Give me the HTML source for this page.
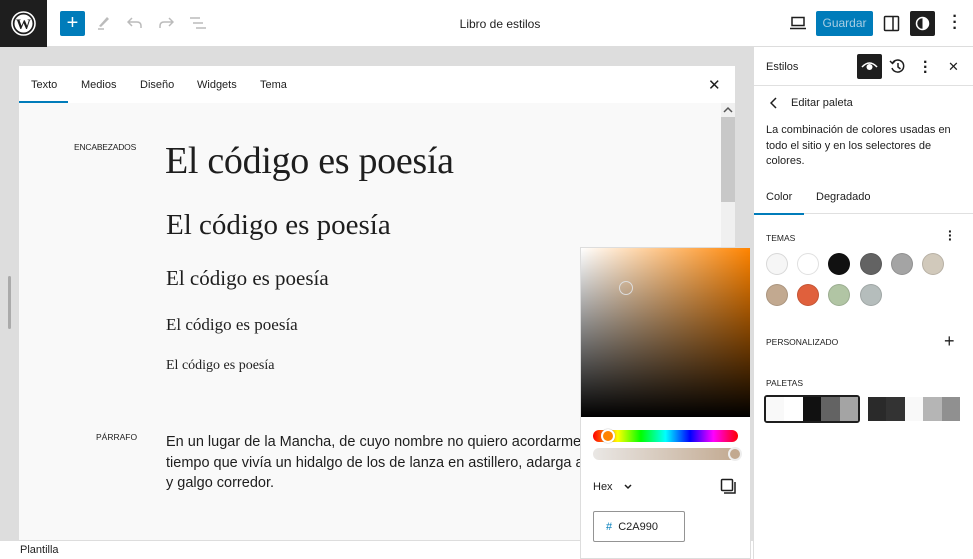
<!DOCTYPE html>
<html><head><meta charset="utf-8"><style>
*{box-sizing:border-box;margin:0;padding:0}
body{width:973px;height:559px;overflow:hidden;font-family:"Liberation Sans",sans-serif;background:#ddd;position:relative;color:#1e1e1e}
.abs{position:absolute}
.top{left:0;top:0;width:973px;height:47px;background:#fff;border-bottom:1px solid #ddd}
.serif{font-family:"Liberation Serif",serif;color:#1e1e1e;white-space:nowrap}
.circ{position:absolute;width:22px;height:22px;border-radius:50%;border:1px solid rgba(0,0,0,.12)}
.sw{display:inline-block;height:100%}
</style></head><body>
<div class="abs top"></div>
<div class="abs" style="left:0;top:0;width:47px;height:47px;background:#1e1e1e"></div>
<svg class="abs" style="left:11px;top:11px" width="25" height="25" viewBox="0 0 25 25"><circle cx="12.5" cy="12.5" r="11.5" fill="none" stroke="#fff" stroke-width="1.6"/><circle cx="12.5" cy="12.5" r="9" fill="#fff"/><text x="12.5" y="18" text-anchor="middle" font-family="Liberation Serif" font-weight="bold" font-size="15" fill="#1e1e1e">W</text></svg>
<div class="abs" style="left:60px;top:11px;width:25px;height:25px;background:#007cba;border-radius:2px;color:#fff;font-size:20px;line-height:24px;text-align:center">+</div>
<svg class="abs" style="left:96px;top:14px" width="16" height="16"><path d="M3 12 L11 3 L13 5 L5 13Z" fill="#bbb"/><path d="M2 15h6" stroke="#bbb" stroke-width="1.5"/></svg>
<svg class="abs" style="left:127px;top:16px" width="16" height="14" fill="none" stroke="#bbb" stroke-width="1.5"><path d="M5 2 L1 6 L5 10 M1 6 H10 Q14 6 14 10 V12"/></svg>
<svg class="abs" style="left:158px;top:16px" width="16" height="14" fill="none" stroke="#bbb" stroke-width="1.5"><path d="M11 2 L15 6 L11 10 M15 6 H6 Q2 6 2 10 V12"/></svg>
<svg class="abs" style="left:189px;top:16px" width="18" height="14" stroke="#bbb" stroke-width="1.5"><path d="M1 2h10M4 7h10M7 12h10"/></svg>
<div class="abs" style="left:0;width:1000px;top:17px;text-align:center;font-size:12px;color:#1e1e1e">Libro de estilos</div>
<svg class="abs" style="left:789px;top:16px" width="18" height="14" fill="none" stroke="#1e1e1e" stroke-width="1.5"><rect x="3" y="1.5" width="12" height="8"/><path d="M1 12.5h16"/></svg>
<div class="abs" style="left:816px;top:11px;width:57px;height:25px;background:#007cba;border-radius:2px;color:#a7cde3;font-size:12px;line-height:25px;text-align:center">Guardar</div>
<svg class="abs" style="left:883px;top:15px" width="17" height="17" fill="none" stroke="#1e1e1e" stroke-width="1.5"><rect x="1.5" y="1.5" width="14" height="14" rx="1"/><path d="M10 1.5v14"/></svg>
<div class="abs" style="left:910px;top:11px;width:25px;height:25px;background:#1e1e1e;border-radius:2px"></div>
<svg class="abs" style="left:915px;top:16px" width="15" height="15"><circle cx="7.5" cy="7.5" r="6" fill="none" stroke="#fff" stroke-width="1.5"/><path d="M7.5 1.5 A6 6 0 0 1 7.5 13.5Z" fill="#fff"/></svg>
<div class="abs" style="left:952px;top:14px;font-size:16px;line-height:6px;font-weight:bold;text-align:center;width:6px">·<br>·<br>·</div>

<div class="abs" style="left:8px;top:276px;width:3px;height:53px;background:#aaa;border-radius:2px"></div>

<div class="abs" style="left:19px;top:66px;width:716px;height:474px;background:#f9f9f9"></div>
<div class="abs" style="left:19px;top:66px;width:716px;height:37px;background:#fff;font-size:11px"></div>
<div class="abs" style="left:31px;top:79px;font-size:11px">Texto</div>
<div class="abs" style="left:81px;top:79px;font-size:11px">Medios</div>
<div class="abs" style="left:140px;top:79px;font-size:11px">Diseño</div>
<div class="abs" style="left:197px;top:79px;font-size:11px">Widgets</div>
<div class="abs" style="left:260px;top:79px;font-size:11px">Tema</div>
<div class="abs" style="left:19px;top:101px;width:49px;height:2px;background:#007cba"></div>
<div class="abs" style="left:708px;top:76px;font-size:15px">✕</div>
<div class="abs" style="left:721px;top:103px;width:14px;height:437px;background:#f0f0f0"></div>
<div class="abs" style="left:721px;top:117px;width:14px;height:85px;background:#c8c8c8"></div>
<svg class="abs" style="left:723px;top:106px" width="10" height="8" fill="none" stroke="#555" stroke-width="1.5"><path d="M1 6 L5 2 L9 6"/></svg>

<div class="abs" style="left:74px;top:142px;font-size:8.5px;letter-spacing:-0.2px">ENCABEZADOS</div>
<div class="abs serif" style="left:165px;top:139px;font-size:38px;letter-spacing:-0.3px">El código es poesía</div>
<div class="abs serif" style="left:166px;top:209px;font-size:29px">El código es poesía</div>
<div class="abs serif" style="left:166px;top:266px;font-size:21px">El código es poesía</div>
<div class="abs serif" style="left:166px;top:315px;font-size:17px">El código es poesía</div>
<div class="abs serif" style="left:166px;top:358px;font-size:14px">El código es poesía</div>
<div class="abs" style="left:96px;top:432px;font-size:8.5px">PÁRRAFO</div>
<div class="abs" style="left:166px;top:432px;font-size:14.5px;line-height:20.5px;white-space:nowrap;width:415px;overflow:hidden">En un lugar de la Mancha, de cuyo nombre no quiero acordarme, no<br>tiempo que vivía un hidalgo de los de lanza en astillero, adarga antigua<br>y galgo corredor.</div>

<div class="abs" style="left:0;top:540px;width:753px;height:19px;background:#fff;border-top:1px solid #ddd;font-size:11px;padding:3px 0 0 20px">Plantilla</div>

<div class="abs" style="left:753px;top:47px;width:220px;height:512px;background:#fff;border-left:1px solid #ddd"></div>
<div class="abs" style="left:754px;top:85px;width:219px;height:1px;background:#e0e0e0"></div>
<div class="abs" style="left:766px;top:61px;font-size:11px">Estilos</div>
<div class="abs" style="left:857px;top:54px;width:25px;height:25px;background:#1e1e1e;border-radius:2px"></div>
<svg class="abs" style="left:861px;top:60px" width="17" height="12"><path d="M1 7 Q8.5 -1 16 7" fill="none" stroke="#fff" stroke-width="1.6"/><circle cx="8.5" cy="7" r="3" fill="#fff"/></svg>
<svg class="abs" style="left:889px;top:58px" width="17" height="17" fill="none" stroke="#1e1e1e" stroke-width="1.5"><path d="M3.5 5 A6 6 0 1 1 3 10"/><path d="M1 3 L3.5 5.5 L6 3"/><path d="M9 5v4l2.5 2"/></svg>
<div class="abs" style="left:923px;top:60px;font-size:16px;line-height:5px;font-weight:bold;width:6px">·<br>·<br>·</div>
<div class="abs" style="left:948px;top:59px;font-size:13px">✕</div>
<svg class="abs" style="left:770px;top:97px" width="8" height="12" fill="none" stroke="#1e1e1e" stroke-width="1.5"><path d="M6 1 L1 6 L6 11"/></svg>
<div class="abs" style="left:791px;top:97px;font-size:11px">Editar paleta</div>
<div class="abs" style="left:766px;top:123px;font-size:11px;line-height:15.5px;width:190px">La combinación de colores usadas en todo el sitio y en los selectores de colores.</div>
<div class="abs" style="left:766px;top:191px;font-size:11px">Color</div>
<div class="abs" style="left:816px;top:191px;font-size:11px">Degradado</div>
<div class="abs" style="left:754px;top:213px;width:219px;height:1px;background:#e0e0e0"></div>
<div class="abs" style="left:754px;top:213px;width:50px;height:2px;background:#007cba"></div>
<div class="abs" style="left:766px;top:233px;font-size:8.5px">TEMAS</div>
<div class="abs" style="left:948px;top:229px;font-size:14px;line-height:4px;font-weight:bold;width:6px">·<br>·<br>·</div>
<div class="circ" style="left:766px;top:253px;background:#f6f6f6"></div>
<div class="circ" style="left:797px;top:253px;background:#fff"></div>
<div class="circ" style="left:828px;top:253px;background:#111"></div>
<div class="circ" style="left:860px;top:253px;background:#636363"></div>
<div class="circ" style="left:891px;top:253px;background:#a4a4a4"></div>
<div class="circ" style="left:922px;top:253px;background:#d1c9bb"></div>
<div class="circ" style="left:766px;top:284px;background:#c2a990"></div>
<div class="circ" style="left:797px;top:284px;background:#e0603c"></div>
<div class="circ" style="left:828px;top:284px;background:#b1c5a4"></div>
<div class="circ" style="left:860px;top:284px;background:#b5bdbc"></div>
<div class="abs" style="left:766px;top:337px;font-size:8.5px">PERSONALIZADO</div>
<div class="abs" style="left:944px;top:331px;font-size:18px">+</div>
<div class="abs" style="left:766px;top:378px;font-size:8.5px">PALETAS</div>
<div class="abs" style="left:764px;top:395px;width:96px;height:28px;border:2px solid #1e1e1e;border-radius:3px;overflow:hidden;display:flex"><span class="sw" style="width:20%;background:#f9f9f9"></span><span class="sw" style="width:20%;background:#fff"></span><span class="sw" style="width:20%;background:#111"></span><span class="sw" style="width:20%;background:#636363"></span><span class="sw" style="width:20%;background:#a4a4a4"></span></div>
<div class="abs" style="left:868px;top:397px;width:92px;height:24px;display:flex"><span class="sw" style="width:20%;background:#2a2a2a"></span><span class="sw" style="width:20%;background:#333"></span><span class="sw" style="width:20%;background:#f9f9f9"></span><span class="sw" style="width:20%;background:#b5b5b5"></span><span class="sw" style="width:20%;background:#909090"></span></div>

<div class="abs" style="left:580px;top:247px;width:171px;height:312px;background:#fff;border:1px solid #ddd"></div>
<div class="abs" style="left:581px;top:248px;width:169px;height:169px;background:linear-gradient(to top,#000,rgba(0,0,0,0)),linear-gradient(to right,#fff,#ff8400)"></div>
<div class="abs" style="left:619px;top:281px;width:14px;height:14px;border-radius:50%;border:1.5px solid #ddd"></div>
<div class="abs" style="left:593px;top:430px;width:145px;height:12px;border-radius:6px;background:linear-gradient(to right,#f00,#ff0 17%,#0f0 33%,#0ff 50%,#00f 67%,#f0f 83%,#f00)"></div>
<div class="abs" style="left:601px;top:429px;width:14px;height:14px;border-radius:50%;background:#ff8400;border:2px solid #fff;box-shadow:0 0 1px #888"></div>
<div class="abs" style="left:593px;top:448px;width:145px;height:12px;border-radius:6px;background:linear-gradient(to right,rgba(194,169,144,0.1),#c2a990),#eee"></div>
<div class="abs" style="left:728px;top:447px;width:14px;height:14px;border-radius:50%;background:#c2a990;border:2px solid #eee"></div>
<div class="abs" style="left:593px;top:481px;font-size:11px">Hex</div>
<svg class="abs" style="left:624px;top:484px" width="8" height="6" fill="none" stroke="#1e1e1e" stroke-width="1.5"><path d="M1 1 L4 4 L7 1"/></svg>
<svg class="abs" style="left:720px;top:478px" width="17" height="17" fill="none" stroke="#1e1e1e" stroke-width="1.5"><rect x="1.5" y="1.5" width="11" height="11" rx="1"/><path d="M15 4v11H4"/></svg>
<div class="abs" style="left:593px;top:511px;width:92px;height:31px;border:1px solid #949494;border-radius:2px;font-size:11px;padding:9px 0 0 12px"><span style="color:#007cba">#</span>&nbsp; C2A990</div>
</body></html>
